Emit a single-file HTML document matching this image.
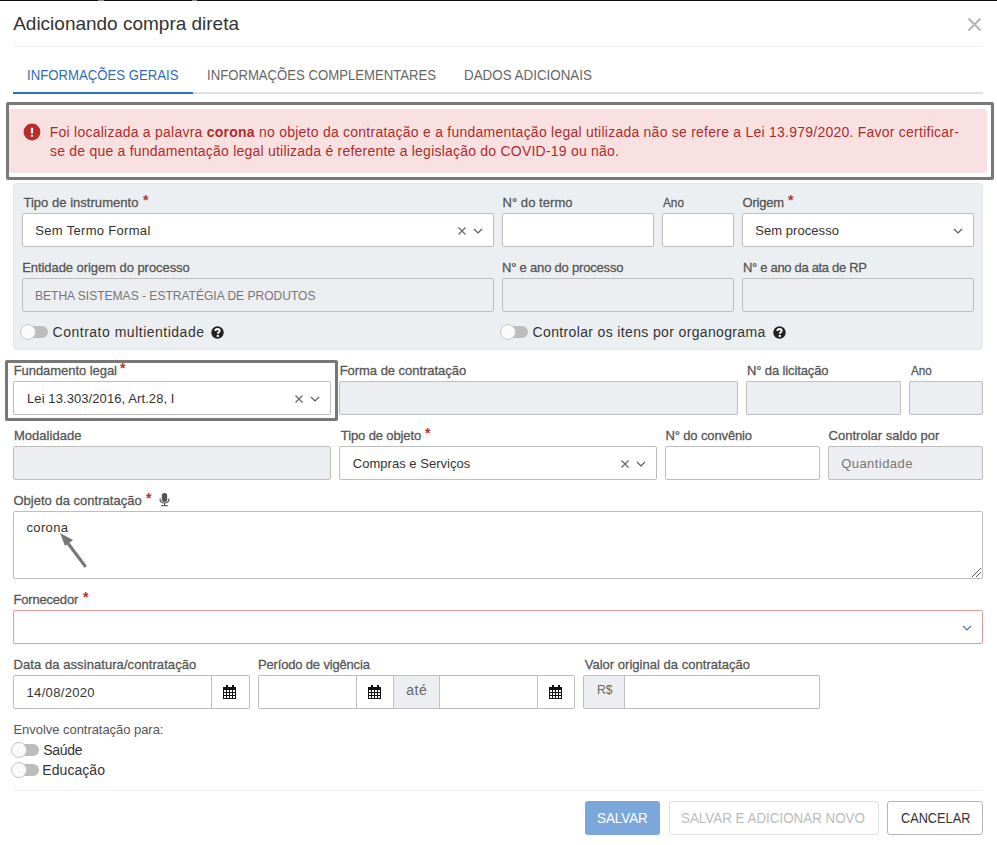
<!DOCTYPE html>
<html><head><meta charset="utf-8">
<style>
*{box-sizing:border-box;margin:0;padding:0}
html,body{width:997px;height:845px;overflow:hidden;background:#fff}
body{position:relative;font-family:"Liberation Sans",sans-serif;color:#333}
.a{position:absolute}
.t{position:absolute;white-space:nowrap;line-height:1}
.lbl{font-size:13px;font-weight:normal;color:#555;-webkit-text-stroke:0.28px #555}
.req{color:#b8302c;font-weight:bold;font-size:14px}
.inp{position:absolute;height:34px;border:1px solid #bebebe;border-radius:2px;background:#fff}
.dis{background:#eceef1}
.itx{font-size:13px;color:#333}
.gtx{font-size:13px;color:#777}
.tog{position:absolute;width:28px;height:16px}
.tog .tr{position:absolute;left:3px;top:2px;width:25px;height:12px;border-radius:6px;background:#bdbdbd}
.tog .kn{position:absolute;left:0;top:0;width:16px;height:16px;border-radius:50%;background:#fafafa;border:1px solid #c8c8c8}
.ttx{font-size:14px;color:#333}
.hline{position:absolute;height:1px;background:#eef0f2}
</style></head><body>
<!-- top dark line -->
<div class="a" style="left:0;top:0;width:997px;height:1px;background:#111"></div>
<div class="a" style="left:98px;top:0;width:6px;height:1px;background:#888"></div>
<div class="a" style="left:192px;top:0;width:5px;height:1px;background:#888"></div>

<!-- title -->
<div class="t" id="ti" style="left:13.2px;top:14px;font-size:19px;color:#333;letter-spacing:-0.008px">Adicionando compra direta</div>
<svg class="a" style="left:967px;top:17px" width="15" height="15" viewBox="0 0 15 15"><path d="M1.5 1.5L13.5 13.5M13.5 1.5L1.5 13.5" stroke="#b4b4b4" stroke-width="2"/></svg>
<div class="hline" style="left:13px;top:46px;width:970px"></div>

<!-- tabs -->
<div class="a" style="left:13px;top:92px;width:970px;height:2px;background:#dee2e5"></div>
<div class="a" style="left:13px;top:92px;width:180px;height:2px;background:#2f6dbf"></div>
<div class="t" id="tab1" style="left:27.1px;top:68px;font-size:14px;color:#2f6db5;transform:scaleX(0.9406);transform-origin:0 0">INFORMAÇÕES GERAIS</div>
<div class="t" id="tab2" style="left:207.1px;top:68px;font-size:14px;color:#666;transform:scaleX(0.9391);transform-origin:0 0">INFORMAÇÕES COMPLEMENTARES</div>
<div class="t" id="tab3" style="left:464.4px;top:68px;font-size:14px;color:#666;transform:scaleX(0.9560);transform-origin:0 0">DADOS ADICIONAIS</div>

<!-- alert -->
<div class="a" style="left:9px;top:109px;width:978px;height:64px;background:#f9e1e2;border-radius:3px"></div>
<div class="a" style="left:6px;top:102px;width:988px;height:78px;border:3px solid #787878;border-radius:2px"></div>
<svg class="a" style="left:23px;top:123px" width="18" height="18" viewBox="0 0 18 18"><circle cx="9" cy="9" r="8.4" fill="#b92c28"/><rect x="7.9" y="4.8" width="2.2" height="5.6" fill="#fff"/><rect x="7.9" y="11.8" width="2.2" height="2" fill="#fff"/></svg>
<div class="t" id="al1" style="left:49.8px;top:125px;font-size:14px;color:#b02c2b;letter-spacing:0.239px">Foi localizada a palavra <b>corona</b> no objeto da contratação e a fundamentação legal utilizada não se refere a Lei 13.979/2020. Favor certificar-</div>
<div class="t" id="al2" style="left:50.0px;top:144px;font-size:14px;color:#b02c2b;letter-spacing:0.220px">se de que a fundamentação legal utilizada é referente a legislação do COVID-19 ou não.</div>

<!-- panel -->
<div class="a" style="left:13px;top:183px;width:970px;height:167px;background:#eceff1;border:1px solid #e3e6e9;border-radius:4px"></div>


<!-- panel contents -->
<div class="t lbl" id="l1" style="left:23.4px;top:196px;letter-spacing:0.033px">Tipo de instrumento</div><div class="t req" style="left:143px;top:193px">*</div>
<div class="inp" style="left:22px;top:213px;width:472px"></div>
<div class="t itx" id="v1" style="left:35.3px;top:224px;letter-spacing:0.313px">Sem Termo Formal</div>
<svg class="a" style="left:458px;top:227px" width="8" height="8" viewBox="0 0 8 8"><path d="M0.5 0.5L7.5 7.5M7.5 0.5L0.5 7.5" stroke="#666" stroke-width="1.2"/></svg>
<svg class="a" style="left:473px;top:228px" width="10" height="6" viewBox="0 0 10 6"><path d="M1 1L5 5L9 1" stroke="#555" stroke-width="1.1" fill="none"/></svg>

<div class="t lbl" id="l2" style="left:502.5px;top:196px;letter-spacing:0.050px">N° do termo</div>
<div class="inp" style="left:502px;top:213px;width:152px"></div>
<div class="t lbl" id="l3" style="left:662.6px;top:196px;transform:scaleX(0.9042);transform-origin:0 0">Ano</div>
<div class="inp" style="left:662px;top:213px;width:72px"></div>
<div class="t lbl" id="l4" style="left:742.5px;top:196px;letter-spacing:-0.220px">Origem</div><div class="t req" style="left:788px;top:193px">*</div>
<div class="inp" style="left:742px;top:213px;width:232px"></div>
<div class="t itx" id="v2" style="left:755.2px;top:224px;letter-spacing:0.064px">Sem processo</div>
<svg class="a" style="left:953px;top:228px" width="10" height="6" viewBox="0 0 10 6"><path d="M1 1L5 5L9 1" stroke="#555" stroke-width="1.1" fill="none"/></svg>

<div class="t lbl" id="l5" style="left:22.2px;top:261px;letter-spacing:-0.058px">Entidade origem do processo</div>
<div class="inp dis" style="left:22px;top:278px;width:472px"></div>
<div class="t gtx" id="v3" style="left:35.2px;top:289px;transform:scaleX(0.9258);transform-origin:0 0">BETHA SISTEMAS - ESTRATÉGIA DE PRODUTOS</div>
<div class="t lbl" id="l6" style="left:502.0px;top:261px;letter-spacing:-0.195px">N° e ano do processo</div>
<div class="inp dis" style="left:502px;top:278px;width:232px"></div>
<div class="t lbl" id="l7" style="left:743.0px;top:261px;letter-spacing:-0.315px">N° e ano da ata de RP</div>
<div class="inp dis" style="left:742px;top:278px;width:232px"></div>

<div class="tog" style="left:20px;top:324px"><div class="tr"></div><div class="kn"></div></div>
<div class="t ttx" id="s1" style="left:52.6px;top:325px;letter-spacing:0.500px">Contrato multientidade</div>
<svg class="a" style="left:211px;top:326px" width="13" height="13" viewBox="0 0 13 13"><circle cx="6.5" cy="6.5" r="6.2" fill="#222"/><path d="M4.4 5.1Q4.4 3 6.5 3Q8.6 3 8.6 4.8Q8.6 5.9 7.4 6.5Q6.9 6.8 6.9 7.7" stroke="#fff" stroke-width="2" fill="none"/><rect x="5.7" y="8.9" width="2.2" height="2" fill="#fff"/></svg>
<div class="tog" style="left:500px;top:324px"><div class="tr"></div><div class="kn"></div></div>
<div class="t ttx" id="s2" style="left:532.6px;top:325px;letter-spacing:0.355px">Controlar os itens por organograma</div>
<svg class="a" style="left:773px;top:326px" width="13" height="13" viewBox="0 0 13 13"><circle cx="6.5" cy="6.5" r="6.2" fill="#222"/><path d="M4.4 5.1Q4.4 3 6.5 3Q8.6 3 8.6 4.8Q8.6 5.9 7.4 6.5Q6.9 6.8 6.9 7.7" stroke="#fff" stroke-width="2" fill="none"/><rect x="5.7" y="8.9" width="2.2" height="2" fill="#fff"/></svg>

<!-- row C -->
<div class="t lbl" id="l8" style="left:13.7px;top:364px;letter-spacing:-0.053px">Fundamento legal</div><div class="t req" style="left:120px;top:361px">*</div>
<div class="inp" style="left:13px;top:381px;width:318px"></div>
<div class="t itx" id="v4" style="left:27.0px;top:392px;letter-spacing:0.088px">Lei 13.303/2016, Art.28, I</div>
<svg class="a" style="left:295px;top:395px" width="8" height="8" viewBox="0 0 8 8"><path d="M0.5 0.5L7.5 7.5M7.5 0.5L0.5 7.5" stroke="#666" stroke-width="1.2"/></svg>
<svg class="a" style="left:310px;top:396px" width="10" height="6" viewBox="0 0 10 6"><path d="M1 1L5 5L9 1" stroke="#555" stroke-width="1.1" fill="none"/></svg>
<div class="a" style="left:5px;top:360px;width:333px;height:61px;border:3px solid #777;border-radius:2px"></div>
<div class="t lbl" id="l9" style="left:339.7px;top:364px;letter-spacing:-0.037px">Forma de contratação</div>
<div class="inp dis" style="left:339px;top:381px;width:399px"></div>
<div class="t lbl" id="l10" style="left:747.0px;top:364px;letter-spacing:-0.121px">N° da licitação</div>
<div class="inp dis" style="left:746px;top:381px;width:155px"></div>
<div class="t lbl" id="l11" style="left:911.1px;top:364px;transform:scaleX(0.8958);transform-origin:0 0">Ano</div>
<div class="inp dis" style="left:909px;top:381px;width:74px"></div>

<!-- row D -->
<div class="t lbl" id="l12" style="left:13.9px;top:429px;letter-spacing:0.044px">Modalidade</div>
<div class="inp dis" style="left:13px;top:446px;width:318px"></div>
<div class="t lbl" id="l13" style="left:340.8px;top:429px;letter-spacing:-0.115px">Tipo de objeto</div><div class="t req" style="left:425px;top:426px">*</div>
<div class="inp" style="left:339px;top:446px;width:318px"></div>
<div class="t itx" id="v5" style="left:352.8px;top:457px;letter-spacing:0.024px">Compras e Serviços</div>
<svg class="a" style="left:621px;top:460px" width="8" height="8" viewBox="0 0 8 8"><path d="M0.5 0.5L7.5 7.5M7.5 0.5L0.5 7.5" stroke="#666" stroke-width="1.2"/></svg>
<svg class="a" style="left:636px;top:461px" width="10" height="6" viewBox="0 0 10 6"><path d="M1 1L5 5L9 1" stroke="#555" stroke-width="1.1" fill="none"/></svg>
<div class="t lbl" id="l14" style="left:665.4px;top:429px;letter-spacing:-0.123px">N° do convênio</div>
<div class="inp" style="left:665px;top:446px;width:155px"></div>
<div class="t lbl" id="l15" style="left:828.5px;top:429px;letter-spacing:0.022px">Controlar saldo por</div>
<div class="inp dis" style="left:828px;top:446px;width:155px"></div>
<div class="t gtx" id="v6" style="left:841.2px;top:457px;letter-spacing:0.444px">Quantidade</div>

<!-- row E -->
<div class="t lbl" id="l16" style="left:13.5px;top:494px;letter-spacing:0.010px">Objeto da contratação</div><div class="t req" style="left:146px;top:491px">*</div>
<svg class="a" style="left:159px;top:492px" width="11" height="15" viewBox="0 0 11 15"><rect x="2.8" y="1" width="5.4" height="9" rx="2.7" fill="#555"/><path d="M1 6.5Q1 11 5.5 11Q10 11 10 6.5" stroke="#555" stroke-width="1.2" fill="none"/><rect x="5" y="11" width="1.1" height="2.5" fill="#555"/><rect x="2.3" y="13" width="6.4" height="1.2" fill="#555"/></svg>
<div class="inp" style="left:13px;top:511px;width:970px;height:68px"></div>
<div class="t itx" id="v7" style="left:26.5px;top:521px;letter-spacing:0.340px">corona</div>
<svg class="a" style="left:969px;top:565px" width="14" height="14" viewBox="0 0 14 14"><path d="M3 12L12 3M7 12L12 7" stroke="#555" stroke-width="1"/></svg>
<svg class="a" style="left:55px;top:528px" width="35" height="42" viewBox="0 0 35 42"><path d="M30 38L12 14" stroke="#777" stroke-width="3" stroke-linecap="round"/><path d="M5 5L18 12L10 18Z" fill="#777"/></svg>

<!-- row F -->
<div class="t lbl" id="l17" style="left:13.5px;top:593px;letter-spacing:-0.189px">Fornecedor</div><div class="t req" style="left:83px;top:590px">*</div>
<div class="inp" style="left:13px;top:610px;width:970px;border-color:#ea9a9a"></div>
<svg class="a" style="left:962px;top:625px" width="10" height="6" viewBox="0 0 10 6"><path d="M1 1L5 5L9 1" stroke="#4a6fa0" stroke-width="1.1" fill="none"/></svg>

<!-- row G -->
<div class="t lbl" id="l18" style="left:13.5px;top:658px;letter-spacing:0.072px">Data da assinatura/contratação</div>
<div class="inp" style="left:13px;top:675px;width:237px"></div>
<div class="a" style="left:211px;top:675px;width:1px;height:34px;background:#c2c2c2"></div>
<div class="t itx" id="v8" style="left:26.5px;top:686px;letter-spacing:0.333px">14/08/2020</div>
<svg class="a cal" style="left:223px;top:685px" width="13" height="14" viewBox="0 0 13 14"><rect x="0" y="2" width="13" height="12" fill="#111"/><rect x="3" y="0" width="2" height="4" fill="#111"/><rect x="9" y="0" width="2" height="4" fill="#111"/><g fill="#fff"><rect x="1" y="5" width="2" height="2"/><rect x="4" y="5" width="2" height="2"/><rect x="7" y="5" width="2" height="2"/><rect x="10" y="5" width="2" height="2"/><rect x="1" y="8" width="2" height="2"/><rect x="4" y="8" width="2" height="2"/><rect x="7" y="8" width="2" height="2"/><rect x="10" y="8" width="2" height="2"/><rect x="1" y="11" width="2" height="2"/><rect x="4" y="11" width="2" height="2"/><rect x="7" y="11" width="2" height="2"/><rect x="10" y="11" width="2" height="2"/></g></svg>

<div class="t lbl" id="l19" style="left:258.0px;top:658px;letter-spacing:-0.167px">Período de vigência</div>
<div class="inp" style="left:258px;top:675px;width:317px"></div>
<div class="a" style="left:356px;top:675px;width:1px;height:34px;background:#c2c2c2"></div>
<div class="a" style="left:393px;top:676px;width:47px;height:32px;background:#eceef1;border-left:1px solid #c2c2c2;border-right:1px solid #c2c2c2"></div>
<div class="t gtx" id="v9" style="left:406.3px;top:683px;font-size:14px;color:#666;letter-spacing:0.500px">até</div>
<div class="a" style="left:537px;top:675px;width:1px;height:34px;background:#c2c2c2"></div>
<svg class="a cal" style="left:368px;top:685px" width="13" height="14" viewBox="0 0 13 14"><rect x="0" y="2" width="13" height="12" fill="#111"/><rect x="3" y="0" width="2" height="4" fill="#111"/><rect x="9" y="0" width="2" height="4" fill="#111"/><g fill="#fff"><rect x="1" y="5" width="2" height="2"/><rect x="4" y="5" width="2" height="2"/><rect x="7" y="5" width="2" height="2"/><rect x="10" y="5" width="2" height="2"/><rect x="1" y="8" width="2" height="2"/><rect x="4" y="8" width="2" height="2"/><rect x="7" y="8" width="2" height="2"/><rect x="10" y="8" width="2" height="2"/><rect x="1" y="11" width="2" height="2"/><rect x="4" y="11" width="2" height="2"/><rect x="7" y="11" width="2" height="2"/><rect x="10" y="11" width="2" height="2"/></g></svg>
<svg class="a cal" style="left:549px;top:685px" width="13" height="14" viewBox="0 0 13 14"><rect x="0" y="2" width="13" height="12" fill="#111"/><rect x="3" y="0" width="2" height="4" fill="#111"/><rect x="9" y="0" width="2" height="4" fill="#111"/><g fill="#fff"><rect x="1" y="5" width="2" height="2"/><rect x="4" y="5" width="2" height="2"/><rect x="7" y="5" width="2" height="2"/><rect x="10" y="5" width="2" height="2"/><rect x="1" y="8" width="2" height="2"/><rect x="4" y="8" width="2" height="2"/><rect x="7" y="8" width="2" height="2"/><rect x="10" y="8" width="2" height="2"/><rect x="1" y="11" width="2" height="2"/><rect x="4" y="11" width="2" height="2"/><rect x="7" y="11" width="2" height="2"/><rect x="10" y="11" width="2" height="2"/></g></svg>

<div class="t lbl" id="l20" style="left:584.7px;top:658px;letter-spacing:0.025px">Valor original da contratação</div>
<div class="inp" style="left:583px;top:675px;width:237px"></div>
<div class="a" style="left:584px;top:676px;width:41px;height:32px;background:#eceef1;border-right:1px solid #c2c2c2;border-radius:2px 0 0 2px"></div>
<div class="t gtx" id="v10" style="left:597.0px;top:683px;font-size:13.5px;color:#666;transform:scaleX(0.9000);transform-origin:0 0">R$</div>

<!-- Envolve -->
<div class="t" id="l21" style="left:13.5px;top:723px;font-size:13px;color:#555;letter-spacing:-0.046px">Envolve contratação para:</div>
<div class="tog" style="left:11px;top:742px"><div class="tr"></div><div class="kn"></div></div>
<div class="t ttx" id="s3" style="left:43.3px;top:743px;letter-spacing:-0.325px">Saúde</div>
<div class="tog" style="left:11px;top:762px"><div class="tr"></div><div class="kn"></div></div>
<div class="t ttx" id="s4" style="left:42.3px;top:763px;letter-spacing:0.057px">Educação</div>

<div class="hline" style="left:13px;top:790px;width:970px"></div>

<!-- buttons -->
<div class="a" style="left:585px;top:801px;width:75px;height:34px;background:#7ba7da;border-radius:3px"></div>
<div class="t" id="b1" style="left:597.0px;top:811px;font-size:14px;color:#fff;transform:scaleX(0.9538);transform-origin:0 0">SALVAR</div>
<div class="a" style="left:669px;top:801px;width:210px;height:34px;border:1px solid #dcdfe3;border-radius:3px"></div>
<div class="t" id="b2" style="left:681.4px;top:811px;font-size:14px;color:#bbb;transform:scaleX(0.9560);transform-origin:0 0">SALVAR E ADICIONAR NOVO</div>
<div class="a" style="left:887px;top:801px;width:96px;height:34px;border:1px solid #b5b5b5;border-radius:3px"></div>
<div class="t" id="b3" style="left:900.6px;top:811px;font-size:14px;color:#333;transform:scaleX(0.9092);transform-origin:0 0">CANCELAR</div>

</body></html>
